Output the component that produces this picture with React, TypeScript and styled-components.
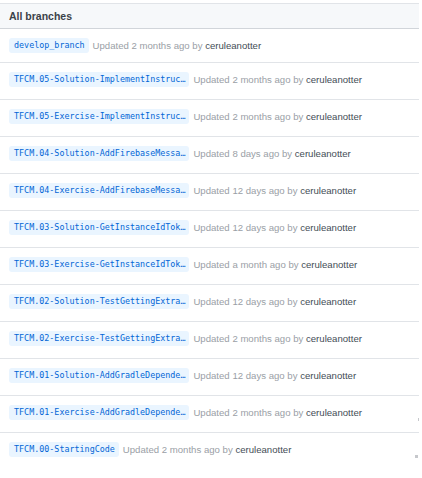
import React from "react";
import styled, { createGlobalStyle } from "styled-components";

const Global = createGlobalStyle`
  html, body { margin: 0; padding: 0; background: #fff; }
  body { font-family: "Liberation Sans", Arial, sans-serif; }
`;

const Page = styled.div`
  position: relative;
  width: 422px;
  height: 478px;
  padding-top: 3px;
  box-sizing: border-box;
  overflow: hidden;
`;

const Panel = styled.div`
  width: 419px;
`;

const Header = styled.div`
  height: 26px;
  box-sizing: border-box;
  background: #f6f8fa;
  border-top: 1px solid #e1e4e8;
  border-bottom: 1px solid #d1d5da;
  display: flex;
  align-items: center;
  padding-left: 9px;
  font-size: 10.5px;
  font-weight: 700;
  color: #3b4249;
`;

const Row = styled.div<{ $first?: boolean; $last?: boolean }>`
  height: ${(p) => (p.$first ? 34 : 37)}px;
  box-sizing: border-box;
  border-bottom: ${(p) => (p.$last ? "none" : "1px solid #e1e4e8")};
  display: flex;
  align-items: flex-start;
  padding: 9px 0 0 9px;
`;

const Badge = styled.span`
  display: inline-block;
  height: 15px;
  line-height: 15px;
  padding: 0 4px 0 5px;
  background: #eaf5ff;
  color: #0366d6;
  border-radius: 3px;
  font-family: "DejaVu Sans Mono", "Liberation Mono", monospace;
  font-size: 8.4px;
  white-space: nowrap;
`;

const Meta = styled.span`
  margin-left: 4px;
  line-height: 15px;
  font-size: 9.6px;
  color: #9aa0a6;
  white-space: nowrap;
`;

const Author = styled.span`
  color: #444d56;
`;

const Mark = styled.div<{ $top: number; $left: number; $w: number; $h: number }>`
  position: absolute;
  top: ${(p) => p.$top}px;
  left: ${(p) => p.$left}px;
  width: ${(p) => p.$w}px;
  height: ${(p) => p.$h}px;
  background: #c6c8cc;
`;

const branches: [string, string][] = [
  ["develop_branch", "2 months ago"],
  ["TFCM.05-Solution-ImplementInstructorNotifications", "2 months ago"],
  ["TFCM.05-Exercise-ImplementInstructorNotifications", "2 months ago"],
  ["TFCM.04-Solution-AddFirebaseMessagingService", "8 days ago"],
  ["TFCM.04-Exercise-AddFirebaseMessagingService", "12 days ago"],
  ["TFCM.03-Solution-GetInstanceIdToken", "12 days ago"],
  ["TFCM.03-Exercise-GetInstanceIdToken", "a month ago"],
  ["TFCM.02-Solution-TestGettingExtras", "12 days ago"],
  ["TFCM.02-Exercise-TestGettingExtras", "2 months ago"],
  ["TFCM.01-Solution-AddGradleDependencies", "12 days ago"],
  ["TFCM.01-Exercise-AddGradleDependencies", "2 months ago"],
  ["TFCM.00-StartingCode", "2 months ago"],
];

const MAX = 33;
const shorten = (s: string) => (s.length > MAX ? s.slice(0, MAX) + "…" : s);

export default function App() {
  return (
    <>
      <Global />
      <Page>
        <Panel>
          <Header>All branches</Header>
          {branches.map(([name, when], i) => (
            <Row key={name} $first={i === 0} $last={i === branches.length - 1}>
              <Badge title={name}>{shorten(name)}</Badge>
              <Meta>
                Updated {when} by <Author>ceruleanotter</Author>
              </Meta>
            </Row>
          ))}
        </Panel>
        <Mark $top={418} $left={418} $w={1} $h={3} />
        <Mark $top={455} $left={415} $w={3} $h={3} />
      </Page>
    </>
  );
}
